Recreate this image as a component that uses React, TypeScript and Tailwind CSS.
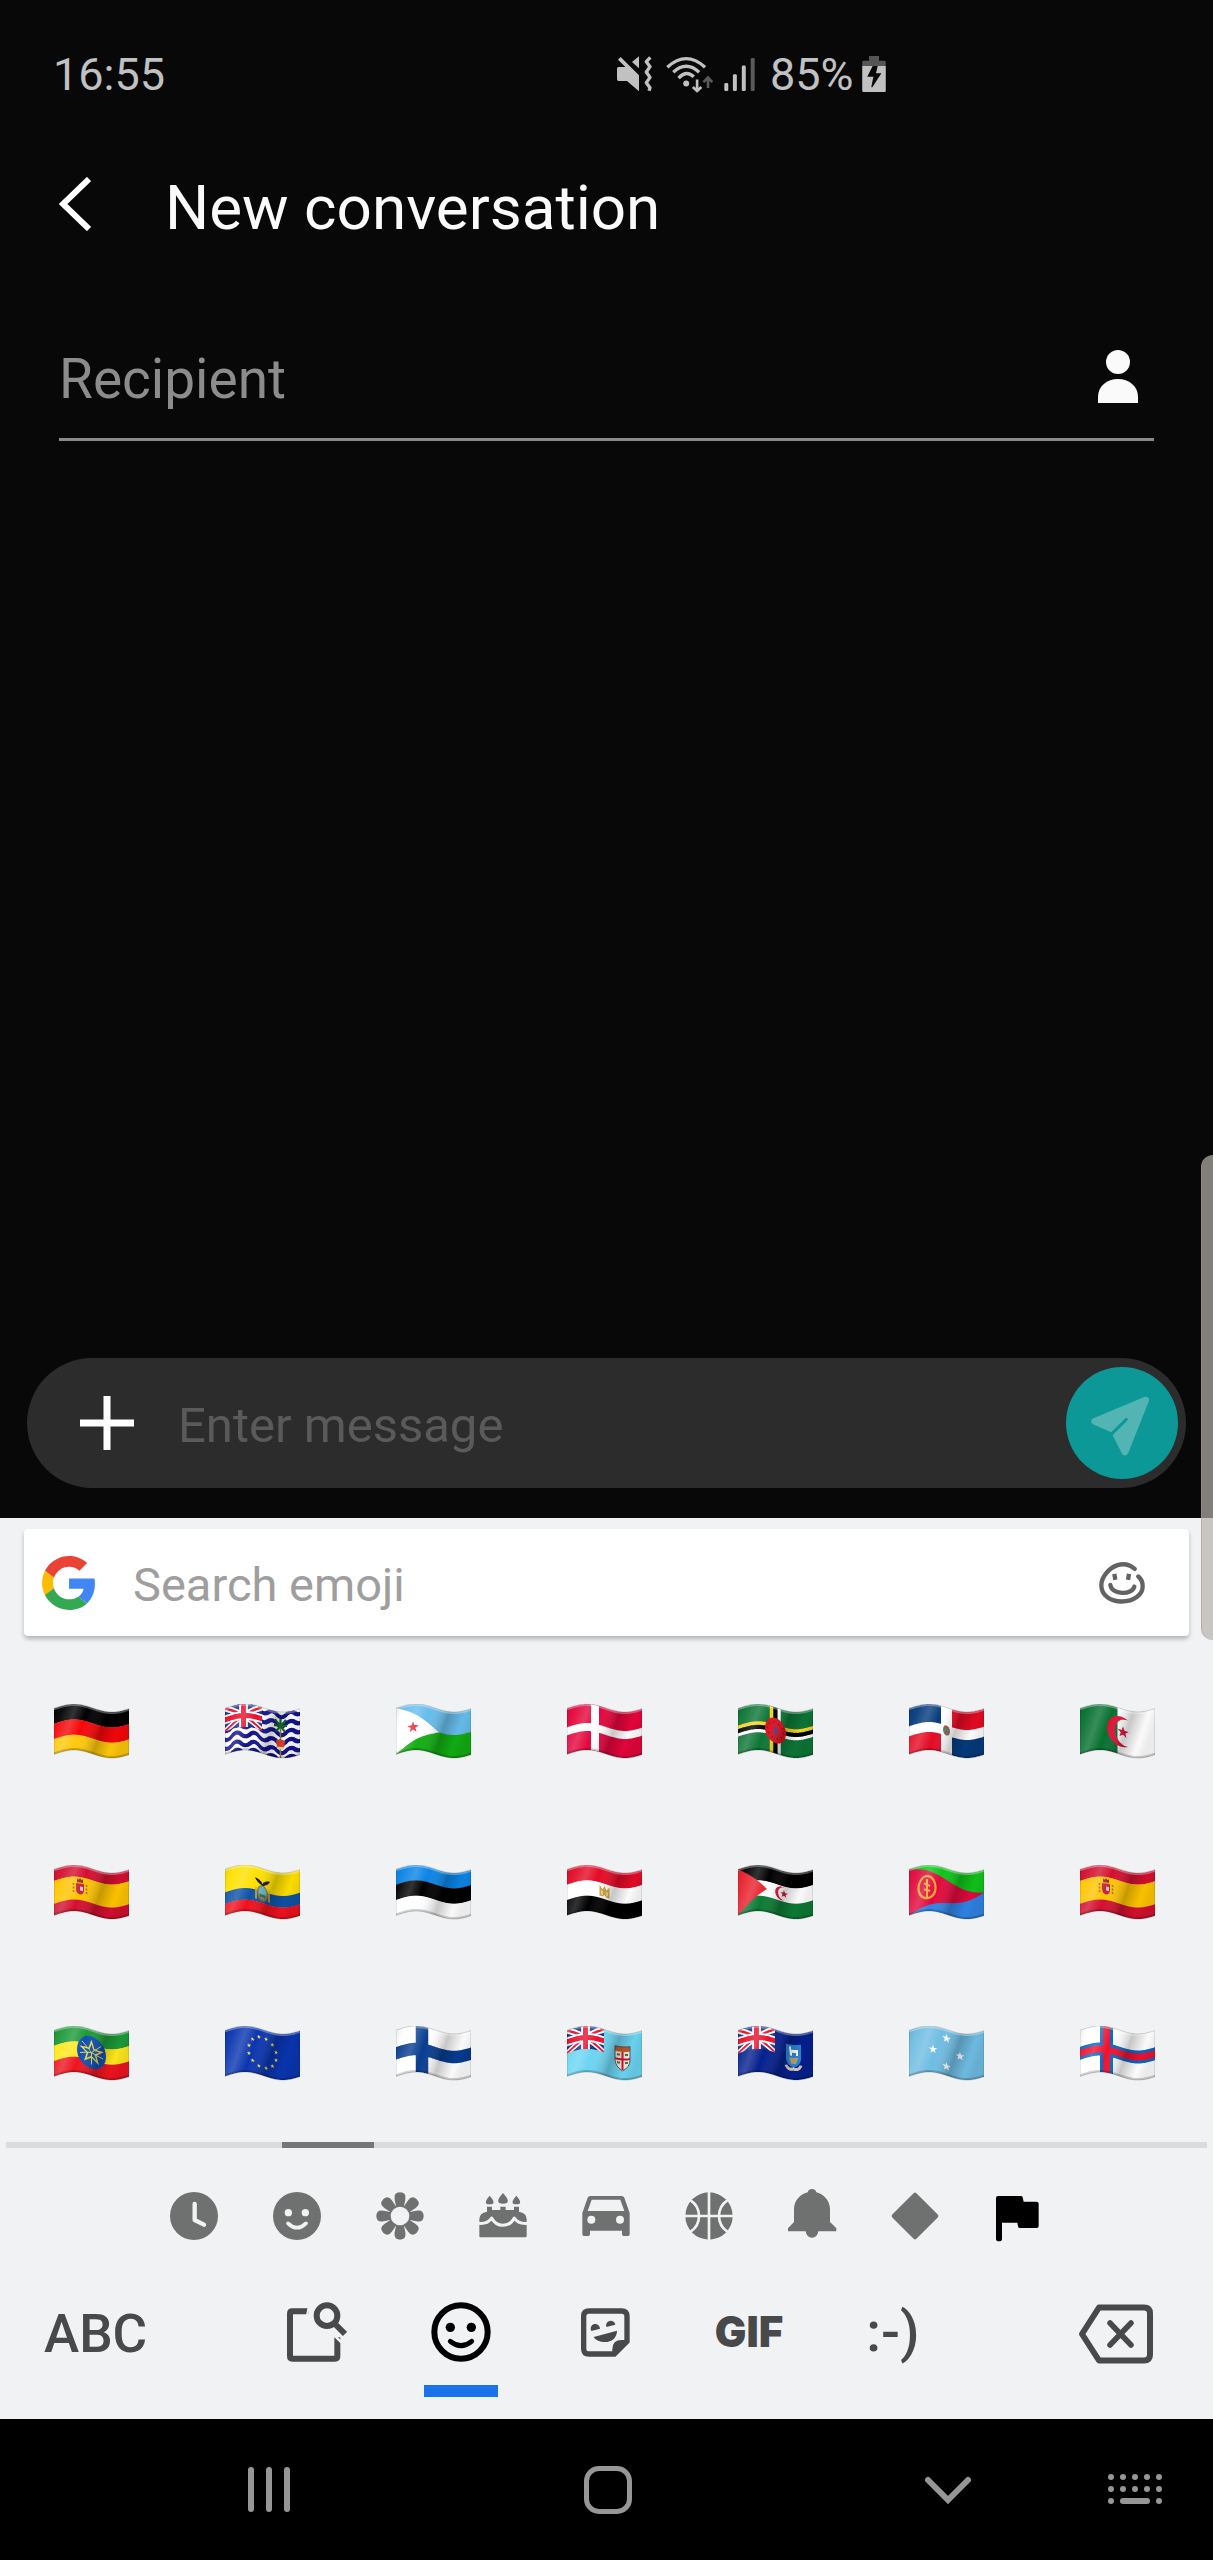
import type { ReactNode } from "react";

/* ---------- Flags ---------- */

const W = 75;
const H = 46;

const wave = (x: number) => 4 - 4 * Math.cos((2 * Math.PI * (x - 20)) / 76);

function starPoints(cx: number, cy: number, r: number, inner = 0.4) {
  return Array.from({ length: 10 }, (_, i) => {
    const a = (Math.PI / 5) * i - Math.PI / 2;
    const d = i % 2 ? r * inner : r;
    return `${(cx + d * Math.cos(a)).toFixed(2)},${(cy + d * Math.sin(a)).toFixed(2)}`;
  }).join(" ");
}

function Star({ x, y, r, fill }: { x: number; y: number; r: number; fill: string }) {
  return <polygon points={starPoints(x, y, r)} fill={fill} />;
}

function Stripes({ colors, weights }: { colors: string[]; weights?: number[] }) {
  const ws = weights ?? colors.map(() => 1);
  const total = ws.reduce((a, b) => a + b, 0);
  let y = 0;
  return (
    <>
      {colors.map((c, i) => {
        const h = (ws[i] / total) * H;
        const r = <rect key={i} x="0" y={y} width={W} height={h + 0.3} fill={c} />;
        y += h;
        return r;
      })}
    </>
  );
}

function Jack({ w, h }: { w: number; h: number }) {
  return (
    <svg x="0" y="0" width={w} height={h} viewBox="0 0 60 36" preserveAspectRatio="none">
      <rect width="60" height="36" fill="#1c2f86" />
      <path d="M0 0L60 36M60 0L0 36" stroke="#fff" strokeWidth="9" />
      <path d="M0 0L60 36M60 0L0 36" stroke="#e8112d" strokeWidth="3.5" />
      <path d="M30 0V36M0 18H60" stroke="#fff" strokeWidth="14" />
      <path d="M30 0V36M0 18H60" stroke="#e8112d" strokeWidth="8" />
    </svg>
  );
}

function SpainArms() {
  return (
    <g>
      <path d="M22 18h8v6q0 4-4 5q-4-1-4-5z" fill="#c4243a" />
      <path d="M23 13l1.500 1.500L26 12.500l1.500 2L29 13v4h-6z" fill="#a3242f" />
      <rect x="26" y="21" width="3" height="4" fill="#d9c4dc" />
      <path d="M19.500 18V28M32.500 18V28" stroke="#a8602a" strokeWidth="1.500" strokeDasharray="2 1.500" />
    </g>
  );
}

const spain = (
  <>
    <Stripes colors={["#d30f2f", "#ffc400", "#d30f2f"]} weights={[1, 2, 1]} />
    <SpainArms />
  </>
);

const flags: { id: string; name: string; art: ReactNode }[] = [
  { id: "de", name: "Germany", art: <Stripes colors={["#000", "#f5060a", "#ffc80a"]} /> },
  {
    id: "io",
    name: "British Indian Ocean Territory",
    art: (
      <>
        <rect width={W} height={H} fill="#fff" />
        {[3, 12, 21, 30, 39, 47].map((y) => (
          <path
            key={y}
            d={`M-2 ${y} q4.5 4.5 9 0 t9 0 t9 0 t9 0 t9 0 t9 0 t9 0 t9 0 t9 0`}
            fill="none"
            stroke="#12128c"
            strokeWidth="4"
          />
        ))}
        <Jack w={37} h={23} />
        <path d="M55.500 14V46" stroke="#8a7a3c" strokeWidth="1.500" />
        <path
          d="M55.500 14L50 8M55.500 14L61 8M55.500 14L49 14M55.500 14L62 14M55.500 14L51 20M55.500 14L60 20M55.500 14V7"
          stroke="#17692f"
          strokeWidth="2.200"
        />
        <path d="M51 29q4.500-3 9 0l-1 7h-7z" fill="#d8402a" />
        <path d="M52 35h7v2.500h-7z" fill="#e8cf8e" />
      </>
    ),
  },
  {
    id: "dj",
    name: "Djibouti",
    art: (
      <>
        <Stripes colors={["#67bdec", "#12ad13"]} />
        <path d="M0 0L43 23L0 46Z" fill="#fff" />
        <Star x={17} y={23} r={6} fill="#e8283c" />
      </>
    ),
  },
  {
    id: "dk",
    name: "Denmark",
    art: (
      <>
        <rect width={W} height={H} fill="#e4053c" />
        <path d="M28 0V46M0 23H75" stroke="#fff" strokeWidth="8" />
      </>
    ),
  },
  {
    id: "dm",
    name: "Dominica",
    art: (
      <>
        <rect width={W} height={H} fill="#0d7536" />
        <path d="M33.500 0V46M0 19H75" stroke="#fbd422" strokeWidth="3.500" />
        <path d="M41 0V46M0 26.500H75" stroke="#fff" strokeWidth="3.500" />
        <path d="M37.500 0V46M0 23H75" stroke="#000" strokeWidth="4" />
        <ellipse cx="37.500" cy="23" rx="10.500" ry="12.500" fill="#e01020" />
        <circle cx="37.500" cy="23" r="8" fill="none" stroke="#5d2a12" strokeWidth="1.500" strokeDasharray="1.500 3.500" />
        <path d="M36 18l3 3v8l-3-3z" fill="#4a3fa0" />
      </>
    ),
  },
  {
    id: "do",
    name: "Dominican Republic",
    art: (
      <>
        <rect width={W} height={H} fill="#fff" />
        <path d="M0 0H32V18H0ZM43 28H75V46H43Z" fill="#053a7c" />
        <path d="M43 0H75V18H43ZM0 28H32V46H0Z" fill="#e30a24" />
        <ellipse cx="37.500" cy="23" rx="3.500" ry="5" fill="#597a63" />
        <path d="M35 20h5M36 25h4" stroke="#b9473f" strokeWidth="2" />
      </>
    ),
  },
  {
    id: "dz",
    name: "Algeria",
    art: (
      <>
        <rect width={W} height={H} fill="#fff" />
        <rect width="37.500" height={H} fill="#06702f" />
        <path d="M48 10A14 15 0 1 0 48 36A11 13.200 0 1 1 48 10Z" fill="#dc1236" />
        <Star x={43} y={23} r={6} fill="#dc1236" />
      </>
    ),
  },
  { id: "es", name: "Spain", art: spain },
  {
    id: "ec",
    name: "Ecuador",
    art: (
      <>
        <Stripes colors={["#ffe000", "#0d52a5", "#f0101c"]} weights={[2, 1, 1]} />
        <path d="M31 20V32M44 20V32" stroke="#d8b030" strokeWidth="1.500" />
        <ellipse cx="37.500" cy="25" rx="5.500" ry="8" fill="#8f6a3c" />
        <ellipse cx="37.500" cy="24" rx="4" ry="6" fill="#62b7c8" />
        <path d="M34.500 26h6v3h-6z" fill="#346d3c" />
        <path d="M30 11q5 0 7.500 4.500q2.500-4.500 7.500-4.500q-1.500 3.500-5.500 5.500q-2 1.500-4 0q-4-2-5.500-5.500z" fill="#171717" />
      </>
    ),
  },
  { id: "ee", name: "Estonia", art: <Stripes colors={["#0a84e6", "#000", "#fff"]} /> },
  {
    id: "eg",
    name: "Egypt",
    art: (
      <>
        <Stripes colors={["#e30b26", "#fff", "#000"]} />
        <path d="M32.500 17.500l3 4l2-4l2 4l3-4v11h-3l-2-2l-2 2h-3z" fill="#cfa23a" />
        <path d="M35 23v4M40 23v4" stroke="#fff" strokeWidth="1" />
      </>
    ),
  },
  {
    id: "eh",
    name: "Western Sahara",
    art: (
      <>
        <Stripes colors={["#000", "#fff", "#0c7a34"]} />
        <path d="M0 0L29 23L0 46Z" fill="#e8202c" />
        <path d="M46 16.500A6.800 6.800 0 1 0 46 29.500A5.600 6.200 0 1 1 46 16.500Z" fill="#d3122f" />
        <Star x={46} y={23} r={4} fill="#d3122f" />
      </>
    ),
  },
  {
    id: "er",
    name: "Eritrea",
    art: (
      <>
        <Stripes colors={["#10c21a", "#2f83e4"]} />
        <path d="M0 0L75 23L0 46Z" fill="#e2093d" />
        <ellipse cx="18" cy="22" rx="8.500" ry="11" fill="none" stroke="#f2a92e" strokeWidth="2.200" />
        <path d="M18 14V34M15 18l6 3M15 24l6 2" stroke="#f2a92e" strokeWidth="2" />
      </>
    ),
  },
  { id: "ea", name: "Ceuta & Melilla", art: spain },
  {
    id: "et",
    name: "Ethiopia",
    art: (
      <>
        <Stripes colors={["#1d9a38", "#ffe81a", "#ee1420"]} />
        <ellipse cx="37.500" cy="23" rx="14.500" ry="16" fill="#0f4fb4" />
        <polygon points={starPoints(37.5, 23, 10.5, 0.4)} fill="none" stroke="#e8dc4c" strokeWidth="1.500" />
        <path d="M37.500 23L28 14M37.500 23L47 14M37.500 23L26 26M37.500 23L49 26M37.500 23V35" stroke="#e8dc4c" strokeWidth="1" />
      </>
    ),
  },
  {
    id: "eu",
    name: "European Union",
    art: (
      <>
        <rect width={W} height={H} fill="#0a35b0" />
        {Array.from({ length: 12 }, (_, i) => {
          const a = (Math.PI / 6) * i + 0.26;
          return <Star key={i} x={37.5 + 14 * Math.cos(a)} y={23 + 15 * Math.sin(a)} r={2.2} fill="#ffe14a" />;
        })}
      </>
    ),
  },
  {
    id: "fi",
    name: "Finland",
    art: (
      <>
        <rect width={W} height={H} fill="#fff" />
        <path d="M26 0V46M0 23H75" stroke="#073c90" strokeWidth="12.500" />
      </>
    ),
  },
  {
    id: "fj",
    name: "Fiji",
    art: (
      <>
        <rect width={W} height={H} fill="#6cd5f2" />
        <Jack w={37} h={23} />
        <path d="M48 13H63V27Q63 33 55.500 37Q48 33 48 27Z" fill="#f2e8da" />
        <path d="M48 13H63V18H48Z" fill="#c85a2c" />
        <path d="M55.500 18V36M48 25.500H63" stroke="#d3122f" strokeWidth="2" />
        <path d="M50 21h3M58 21h3M50 29h3M58 29h3" stroke="#3f7a3c" strokeWidth="2" />
        <path d="M48 13H63V27Q63 33 55.500 37Q48 33 48 27Z" fill="none" stroke="#555" strokeWidth="1" />
      </>
    ),
  },
  {
    id: "fk",
    name: "Falkland Islands",
    art: (
      <>
        <rect width={W} height={H} fill="#05208e" />
        <Jack w={37} h={23} />
        <path d="M48 11H63V25Q63 31 55.500 34Q48 31 48 25Z" fill="#2d86d4" />
        <path d="M51 13h2v3h7v6h-2v-3h-4v3h-2z" fill="#fff" />
        <path d="M51 24h9l-2 6h-5z" fill="#b9a070" />
        <path d="M48 32q2 5 7.500 3q5.500 2 7.500-3" fill="none" stroke="#d9c9b3" strokeWidth="3" />
      </>
    ),
  },
  {
    id: "fm",
    name: "Micronesia",
    art: (
      <>
        <rect width={W} height={H} fill="#6fbde3" />
        <Star x={37.5} y={9} r={4.5} fill="#fff" />
        <Star x={24} y={23} r={4.5} fill="#fff" />
        <Star x={51} y={23} r={4.5} fill="#fff" />
        <Star x={37.5} y={37} r={4.5} fill="#fff" />
      </>
    ),
  },
  {
    id: "fo",
    name: "Faroe Islands",
    art: (
      <>
        <rect width={W} height={H} fill="#fff" />
        <path d="M26.500 0V46M0 23H75" stroke="#0b68c4" strokeWidth="13" />
        <path d="M26.500 0V46M0 23H75" stroke="#ed1230" strokeWidth="7" />
      </>
    ),
  },
];

const outline = (() => {
  const xs = Array.from({ length: W + 1 }, (_, i) => i);
  const top = xs.map((x) => `${x},${wave(x).toFixed(2)}`);
  const bottom = [...xs].reverse().map((x) => `${x},${(wave(x) + H).toFixed(2)}`);
  return [...top, ...bottom].join(" ");
})();
const topEdge = Array.from({ length: W + 1 }, (_, x) => `${x},${(wave(x) + 1).toFixed(2)}`).join(" ");
const bottomEdge = Array.from({ length: W + 1 }, (_, x) => `${x},${(wave(x) + H - 1).toFixed(2)}`).join(" ");

/* Shared shading and the flat artwork that every flag is cut from. */
function FlagDefs() {
  return (
    <svg className="absolute h-0 w-0" aria-hidden="true">
      <defs>
        <linearGradient id="fold" x1="0" y1="0.1" x2="1" y2="0.35">
          <stop offset="0" stopColor="#000" stopOpacity="0.08" />
          <stop offset="0.1" stopColor="#fff" stopOpacity="0.05" />
          <stop offset="0.26" stopColor="#fff" stopOpacity="0.2" />
          <stop offset="0.42" stopColor="#fff" stopOpacity="0" />
          <stop offset="0.68" stopColor="#000" stopOpacity="0.22" />
          <stop offset="0.88" stopColor="#000" stopOpacity="0.02" />
          <stop offset="1" stopColor="#000" stopOpacity="0.08" />
        </linearGradient>
        {flags.map((f) => (
          <g key={f.id} id={`flag-${f.id}`}>
            {f.art}
          </g>
        ))}
      </defs>
    </svg>
  );
}

function Flag({ id }: { id: string }) {
  return (
    <svg width="75" height="56" viewBox="0 0 75 56" aria-hidden="true">
      {Array.from({ length: W }, (_, x) => (
        <svg key={x} x={x} y={wave(x + 0.5)} width="1" height={H} viewBox={`${x} 0 1 ${H}`}>
          <use href={`#flag-${id}`} />
        </svg>
      ))}
      <polygon points={outline} fill="url(#fold)" stroke="#000" strokeOpacity="0.18" strokeWidth="1" />
      <polyline points={topEdge} fill="none" stroke="#fff" strokeOpacity="0.3" strokeWidth="2" />
      <polyline points={bottomEdge} fill="none" stroke="#000" strokeOpacity="0.18" strokeWidth="2" />
    </svg>
  );
}

/* ---------- Status bar icons ---------- */

const MuteVibrate = () => (
  <svg width="35" height="36" viewBox="0 0 105 108" fill="#c1c1c1" aria-hidden="true">
    <path d="M0 38Q0 33 5 33H25L3 11L11 3L66 58V106L30 75H5Q0 75 0 70Z" />
    <path d="M66 1V37L45 18Z" />
    <path d="M100 4L88 17L99 32L88 48L99 64L88 80L99 95L96 104" fill="none" stroke="#c1c1c1" strokeWidth="10" strokeLinejoin="round" />
  </svg>
);

const Wifi = () => (
  <svg width="47" height="37" viewBox="0 0 142 110" fill="none" stroke="#c1c1c1" strokeWidth="10" aria-hidden="true">
    <path d="M4 33Q61 -19 118 33M22 48Q61 12 100 48M38 66Q61 40 84 62" />
    <circle cx="61" cy="82" r="9" fill="#c1c1c1" stroke="none" />
    <path d="M94 70V105M81 93L94 105L107 93" strokeWidth="8" />
    <path d="M127 96V65M113 78L127 64L140 78" stroke="#5a5a5a" strokeWidth="8" />
  </svg>
);

const Signal = () => (
  <svg width="31" height="33" viewBox="0 0 92 100" fill="#c1c1c1" aria-hidden="true">
    <rect x="0" y="76" width="12" height="24" rx="4" />
    <rect x="26" y="49" width="12" height="51" rx="4" />
    <rect x="53" y="23" width="12" height="77" rx="4" />
    <rect x="80" y="0" width="12" height="100" rx="4" fill="#5a5a5a" />
  </svg>
);

const Battery = () => (
  <svg width="24" height="36" viewBox="0 0 70 107" aria-hidden="true">
    <path d="M20 0H50V14H66Q70 14 70 18V30H0V18Q0 14 4 14H20Z" fill="#555" />
    <path d="M0 30H70V103Q70 107 66 107H4Q0 107 0 103Z" fill="#c1c1c1" />
    <path d="M31 30H46L41 51H57L30 93H27L33 62H15Z" fill="#080808" />
  </svg>
);

/* ---------- Category icons ---------- */

const PANEL = "#f1f2f4";

const categories: { name: string; art: ReactNode; active?: boolean }[] = [
  {
    name: "Recent",
    art: (
      <>
        <circle cx="75" cy="75" r="72" />
        <path d="M77 39V87L105 101" fill="none" stroke={PANEL} strokeWidth="13" strokeLinecap="round" strokeLinejoin="round" />
      </>
    ),
  },
  {
    name: "Smileys",
    art: (
      <>
        <circle cx="75" cy="75" r="72" />
        <circle cx="49" cy="65" r="11" fill={PANEL} />
        <circle cx="100" cy="65" r="11" fill={PANEL} />
        <path d="M48 97Q75 123 102 97" fill="none" stroke={PANEL} strokeWidth="11" strokeLinecap="round" />
      </>
    ),
  },
  {
    name: "Nature",
    art: (
      <>
        {[0, 45, 90, 135, 180, 225, 270, 315].map((a) => (
          <path key={a} transform={`rotate(${a} 75 75)`} d="M64 50L59 26Q55 4 75 4Q95 4 91 26L86 50Z" />
        ))}
        <circle cx="75" cy="75" r="32" />
        <circle cx="75" cy="75" r="28" fill={PANEL} />
      </>
    ),
  },
  {
    name: "Food",
    art: (
      <>
        <path d="M27 62V47H42V57H67V47H83V57H108V47H123V62Q146 66 146 84V135Q146 139 142 139H8Q4 139 4 135V84Q4 66 27 62Z" />
        <path d="M0 97Q30 100 41 81Q52 103 75 103Q98 103 109 81Q120 100 150 97" fill="none" stroke={PANEL} strokeWidth="9" strokeLinejoin="round" />
        <path d="M35 14Q58 40 35 40Q12 40 35 14ZM75 6Q104 38 75 38Q46 38 75 6ZM115 14Q138 40 115 40Q92 40 115 14Z" />
      </>
    ),
  },
  {
    name: "Travel",
    art: (
      <>
        <path d="M4 66L20 20Q22 15 28 15H122Q128 15 130 20L146 66V130Q146 135 141 135H128Q123 135 123 130V119H27V130Q27 135 22 135H9Q4 135 4 130Z" />
        <path d="M32 26H118L130 60H20Z" fill={PANEL} />
        <circle cx="31" cy="86" r="12" fill={PANEL} />
        <circle cx="117" cy="86" r="12" fill={PANEL} />
      </>
    ),
  },
  {
    name: "Activities",
    art: (
      <>
        <circle cx="75" cy="75" r="71" />
        <path d="M75 0V150M0 75H150M20 28Q45 45 45 75Q45 105 20 122M130 28Q105 45 105 75Q105 105 130 122" fill="none" stroke={PANEL} strokeWidth="8" />
      </>
    ),
  },
  {
    name: "Objects",
    art: <path d="M3 121V112L21 93V55C21 25 45 8 62 4Q65 -6 75 -6Q85 -6 88 4C105 8 129 25 129 55V93L148 112V121H94Q91 140 75 140Q59 140 56 121Z" />,
  },
  {
    name: "Symbols",
    art: <path d="M75 11L139 75L75 139L11 75Z" stroke="#6f7170" strokeWidth="12" strokeLinejoin="round" />,
  },
  {
    name: "Flags",
    active: true,
    art: <path d="M15 15H84Q88 15 89 19L92 32H131Q137 32 137 38V105Q137 111 131 111H80Q75 111 75 106L73 95H27V143Q27 151 18 151Q9 151 9 143V21Q9 15 15 15Z" />,
  },
];

/* ---------- Keyboard icons ---------- */

const GoogleLogo = () => (
  <svg width="53" height="54" viewBox="0 0 47 48" aria-hidden="true">
    <path fill="#EA4335" d="M24 9.500c3.540 0 6.710 1.220 9.210 3.600l6.850-6.850C35.900 2.380 30.470 0 24 0 14.620 0 6.510 5.380 2.560 13.220l7.980 6.190C12.430 13.720 17.740 9.500 24 9.500z" />
    <path fill="#4285F4" d="M46.980 24.550c0-1.570-.15-3.090-.38-4.550H24v9.020h12.940c-.58 2.960-2.260 5.480-4.780 7.180l7.730 6c4.510-4.180 7.090-10.360 7.090-17.650z" />
    <path fill="#FBBC05" d="M10.530 28.590c-.48-1.450-.76-2.990-.76-4.590s.27-3.140.76-4.590l-7.980-6.190C.92 16.460 0 20.120 0 24c0 3.880.92 7.540 2.560 10.780l7.970-6.190z" />
    <path fill="#34A853" d="M24 48c6.480 0 11.930-2.130 15.890-5.810l-7.730-6c-2.150 1.450-4.920 2.300-8.160 2.300-6.260 0-11.570-4.220-13.470-9.910l-7.980 6.190C6.510 42.620 14.620 48 24 48z" />
  </svg>
);

const ImageSearch = () => (
  <svg width="60" height="60" viewBox="0 0 180 180" fill="none" stroke="#48494b" strokeWidth="18" aria-hidden="true">
    <path d="M64 28H16Q9 28 9 35V163Q9 170 16 170H144Q151 170 151 163V106" />
    <path d="M66 10L60 40" stroke={PANEL} strokeWidth="6" />
    <circle cx="120" cy="41" r="31" />
    <path d="M141 63L174 96" />
    <path d="M138 96L164 122" stroke={PANEL} strokeWidth="8" />
  </svg>
);

const Smiley = () => (
  <svg width="60" height="60" viewBox="0 0 180 180" fill="none" stroke="#000" aria-hidden="true">
    <circle cx="90" cy="90" r="80" strokeWidth="18" />
    <circle cx="58" cy="76" r="14" fill="#000" stroke="none" />
    <circle cx="121" cy="76" r="14" fill="#000" stroke="none" />
    <path d="M58 118Q90 144 122 118" strokeWidth="15" strokeLinecap="round" />
  </svg>
);

const Sticker = () => (
  <svg width="60" height="60" viewBox="0 0 180 180" fill="#48494b" aria-hidden="true">
    <path d="M42 27H140Q156 27 156 43V118L118 156H42Q26 156 26 140V43Q26 27 42 27Z" fill="none" stroke="#48494b" strokeWidth="16" />
    <path d="M112 160V142Q112 114 140 114H160Z" />
    <path d="M49 87A14 14 0 1 1 75 80ZM94 75A14 14 0 1 1 121 68ZM56 105L126 86C126 108 110 120 90 120C75 120 62 115 56 105Z" />
  </svg>
);

const Backspace = () => (
  <svg width="75" height="60" viewBox="0 0 75 60" fill="none" stroke="#48494b" strokeWidth="6" strokeLinejoin="round" aria-hidden="true">
    <path d="M21 3.500H66Q72 3.500 72 9.500V50.500Q72 56.500 66 56.500H21L4 30Z" />
    <path d="M32 19L53 41M53 19L32 41" strokeWidth="5.500" strokeLinecap="round" />
  </svg>
);

const OpenSmiley = () => (
  <svg width="46" height="42" viewBox="0 0 138 125" fill="none" stroke="#636363" strokeWidth="13" strokeLinecap="round" aria-hidden="true">
    <path d="M107 20C92 7 72 4 56 9C30 17 7 45 7 70C7 100 35 118 68 118C105 118 131 98 131 72C131 58 125 49 118 43" />
    <path d="M34 68C37 98 100 100 106 73" />
    <path d="M46 35L49 53M90 35L87 53" strokeLinecap="butt" />
  </svg>
);

const SendIcon = () => (
  <svg width="112" height="112" viewBox="0 0 338 338" aria-hidden="true">
    <path d="M240 100L87 164L144 189L178 256Z" fill="#52b5b3" stroke="#52b5b3" strokeWidth="21" strokeLinejoin="round" />
    <path d="M135 205L182 158" stroke="#0b9896" strokeWidth="9" strokeLinecap="round" />
  </svg>
);

const tool = "flex h-[100px] w-36 items-center justify-center";

export default function App() {
  return (
    <div className="relative flex min-h-screen flex-col overflow-hidden bg-[#080808] font-['Roboto',sans-serif]">
      <FlagDefs />

      {/* Status bar */}
      <div className="flex h-[148px] items-center justify-between pl-[53px] pr-[27%] text-[45px] leading-none text-[#c1c1c1]">
        <time>16:55</time>
        <div className="flex items-center">
          <MuteVibrate />
          <span className="ml-3.5 mr-[11px]">
            <Wifi />
          </span>
          <Signal />
          <span className="ml-[15px] mr-2">85%</span>
          <Battery />
        </div>
      </div>

      {/* Title */}
      <header className="flex h-[120px] items-center gap-[74px] pl-[59px]">
        <button type="button" aria-label="Back" className="pb-2">
          <svg width="32" height="54" viewBox="0 0 32 54" fill="none" stroke="#fff" strokeWidth="6" aria-hidden="true">
            <path d="M30 2L4 27L30 52" />
          </svg>
        </button>
        <h1 className="text-[62px] leading-none text-[#fafafa]">New conversation</h1>
      </header>

      {/* Recipient */}
      <div className="mx-[59px] mt-12 flex h-[125px] items-center justify-between border-b-[3px] border-[#8a8a8a] pb-0.5 pr-4">
        <input
          aria-label="Recipient"
          placeholder="Recipient"
          className="min-w-0 flex-1 bg-transparent pt-1.5 text-[55px] leading-none text-white outline-none placeholder:text-[#8c8c8c] placeholder:opacity-100"
        />
        <button type="button" aria-label="Choose contact">
          <svg width="40" height="53" viewBox="0 0 40 53" fill="#fafafa" aria-hidden="true">
            <circle cx="20" cy="12" r="12" />
            <path d="M0 53V47C0 36 9 29 20 29S40 36 40 47V53Z" />
          </svg>
        </button>
      </div>

      <main className="flex-1" />

      {/* Composer */}
      <form className="mx-[27px] mb-[30px] flex h-[130px] items-center rounded-full bg-[#2c2c2c] pl-[53px] pr-2">
        <button type="button" aria-label="Add attachment">
          <svg width="54" height="54" viewBox="0 0 54 54" stroke="#fff" strokeWidth="7" aria-hidden="true">
            <path d="M27 0V54M0 27H54" />
          </svg>
        </button>
        <input
          aria-label="Enter message"
          placeholder="Enter message"
          className="ml-11 min-w-0 flex-1 bg-transparent pt-1 text-[49px] leading-none text-white outline-none placeholder:text-[#5a5a5a] placeholder:opacity-100"
        />
        <button type="button" aria-label="Send" className="rounded-full bg-[#0b9896]">
          <SendIcon />
        </button>
      </form>

      {/* Emoji keyboard */}
      <section className="h-[901px] bg-[#f1f2f4] pt-[11px]" aria-label="Emoji keyboard">
        <div className="mx-6 flex h-[107px] items-center rounded bg-white pl-[18px] pr-11 shadow-[0_3px_4px_rgba(0,0,0,0.25)]">
          <GoogleLogo />
          <input
            aria-label="Search emoji"
            placeholder="Search emoji"
            className="ml-[38px] min-w-0 flex-1 bg-transparent pt-1 text-[47px] leading-none text-black outline-none placeholder:text-[#9e9e9e] placeholder:opacity-100"
          />
          <button type="button" aria-label="Draw an emoji">
            <OpenSmiley />
          </button>
        </div>

        <div className="ml-1.5 mr-2.5 mt-[15px] grid grid-cols-7">
          {flags.map((f) => (
            <button key={f.id} type="button" aria-label={f.name} className="flex h-[161px] items-center justify-center">
              <Flag id={f.id} />
            </button>
          ))}
        </div>

        <div className="mx-1.5 mt-2 h-1.5 bg-[#dadbdd]">
          <div className="ml-[23%] h-full w-[92px] bg-[#757678]" />
        </div>

        <nav className="mr-0.5 mt-[43px] flex justify-center" aria-label="Emoji categories">
          {categories.map((c) => (
            <button key={c.name} type="button" aria-label={c.name} className="flex w-[103px] justify-center">
              <svg
                width="50"
                height="50"
                viewBox="0 0 150 150"
                className="overflow-visible"
                fill={c.active ? "#000" : "#6f7170"}
                aria-hidden="true"
              >
                {c.art}
              </svg>
            </button>
          ))}
        </nav>

        <div className="mt-[41px] flex items-start pl-[44px] pr-[60px] text-[#48494b]">
          <button type="button" className="h-[104px] w-[201px] text-left text-[53px] font-medium leading-none">
            ABC
          </button>
          <div className="flex">
            <button type="button" aria-label="Image search" className={tool}>
              <ImageSearch />
            </button>
            <button type="button" aria-label="Emoji" className="flex h-[115px] w-36 flex-col items-center justify-between pt-5">
              <Smiley />
              <span className="h-3 w-[74px] bg-[#1a73e8]" />
            </button>
            <button type="button" aria-label="Stickers" className={tool}>
              <Sticker />
            </button>
            <button
              type="button"
              className="flex h-[100px] w-36 items-center justify-center font-['Inter',sans-serif] text-[42px] font-black leading-none"
            >
              GIF
            </button>
            <button type="button" className="flex h-[100px] w-36 items-center justify-center text-[56px] font-medium leading-none">
              :-)
            </button>
          </div>
          <button type="button" aria-label="Backspace" className="ml-auto flex h-[104px] items-center">
            <Backspace />
          </button>
        </div>
      </section>

      {/* System navigation */}
      <nav className="flex h-[141px] items-center justify-between bg-black pl-[248px] pr-[51px]" aria-label="System">
        <button type="button" aria-label="Recent apps">
          <svg width="42" height="45" viewBox="0 0 42 45" fill="#969696" aria-hidden="true">
            <rect width="6" height="45" rx="3" />
            <rect x="18" width="6" height="45" rx="3" />
            <rect x="36" width="6" height="45" rx="3" />
          </svg>
        </button>
        <button type="button" aria-label="Home">
          <span className="block size-12 rounded-[15px] border-[5px] border-[#969696]" />
        </button>
        <div className="flex items-center gap-[137px]">
          <button type="button" aria-label="Hide keyboard">
            <svg width="46" height="28" viewBox="0 0 46 28" fill="none" stroke="#969696" strokeWidth="6" strokeLinecap="round" aria-hidden="true">
              <path d="M3 4L23 24L43 4" />
            </svg>
          </button>
          <button type="button" aria-label="Change keyboard">
            <svg width="54" height="31" viewBox="0 0 54 31" fill="#969696" aria-hidden="true">
              {[3, 15, 27, 39, 51].map((x) => (
                <g key={x}>
                  <circle cx={x} cy="3" r="3" />
                  <circle cx={x} cy="15" r="3" />
                </g>
              ))}
              <circle cx="3" cy="27" r="3" />
              <rect x="12" y="24" width="30" height="6" rx="3" />
              <circle cx="51" cy="27" r="3" />
            </svg>
          </button>
        </div>
      </nav>

      {/* Edge panel handle */}
      <div className="absolute bottom-[920px] right-0 h-[485px] w-3 rounded-l-xl border-l border-[#99959280] bg-[#b7b2adb3]" />
    </div>
  );
}
